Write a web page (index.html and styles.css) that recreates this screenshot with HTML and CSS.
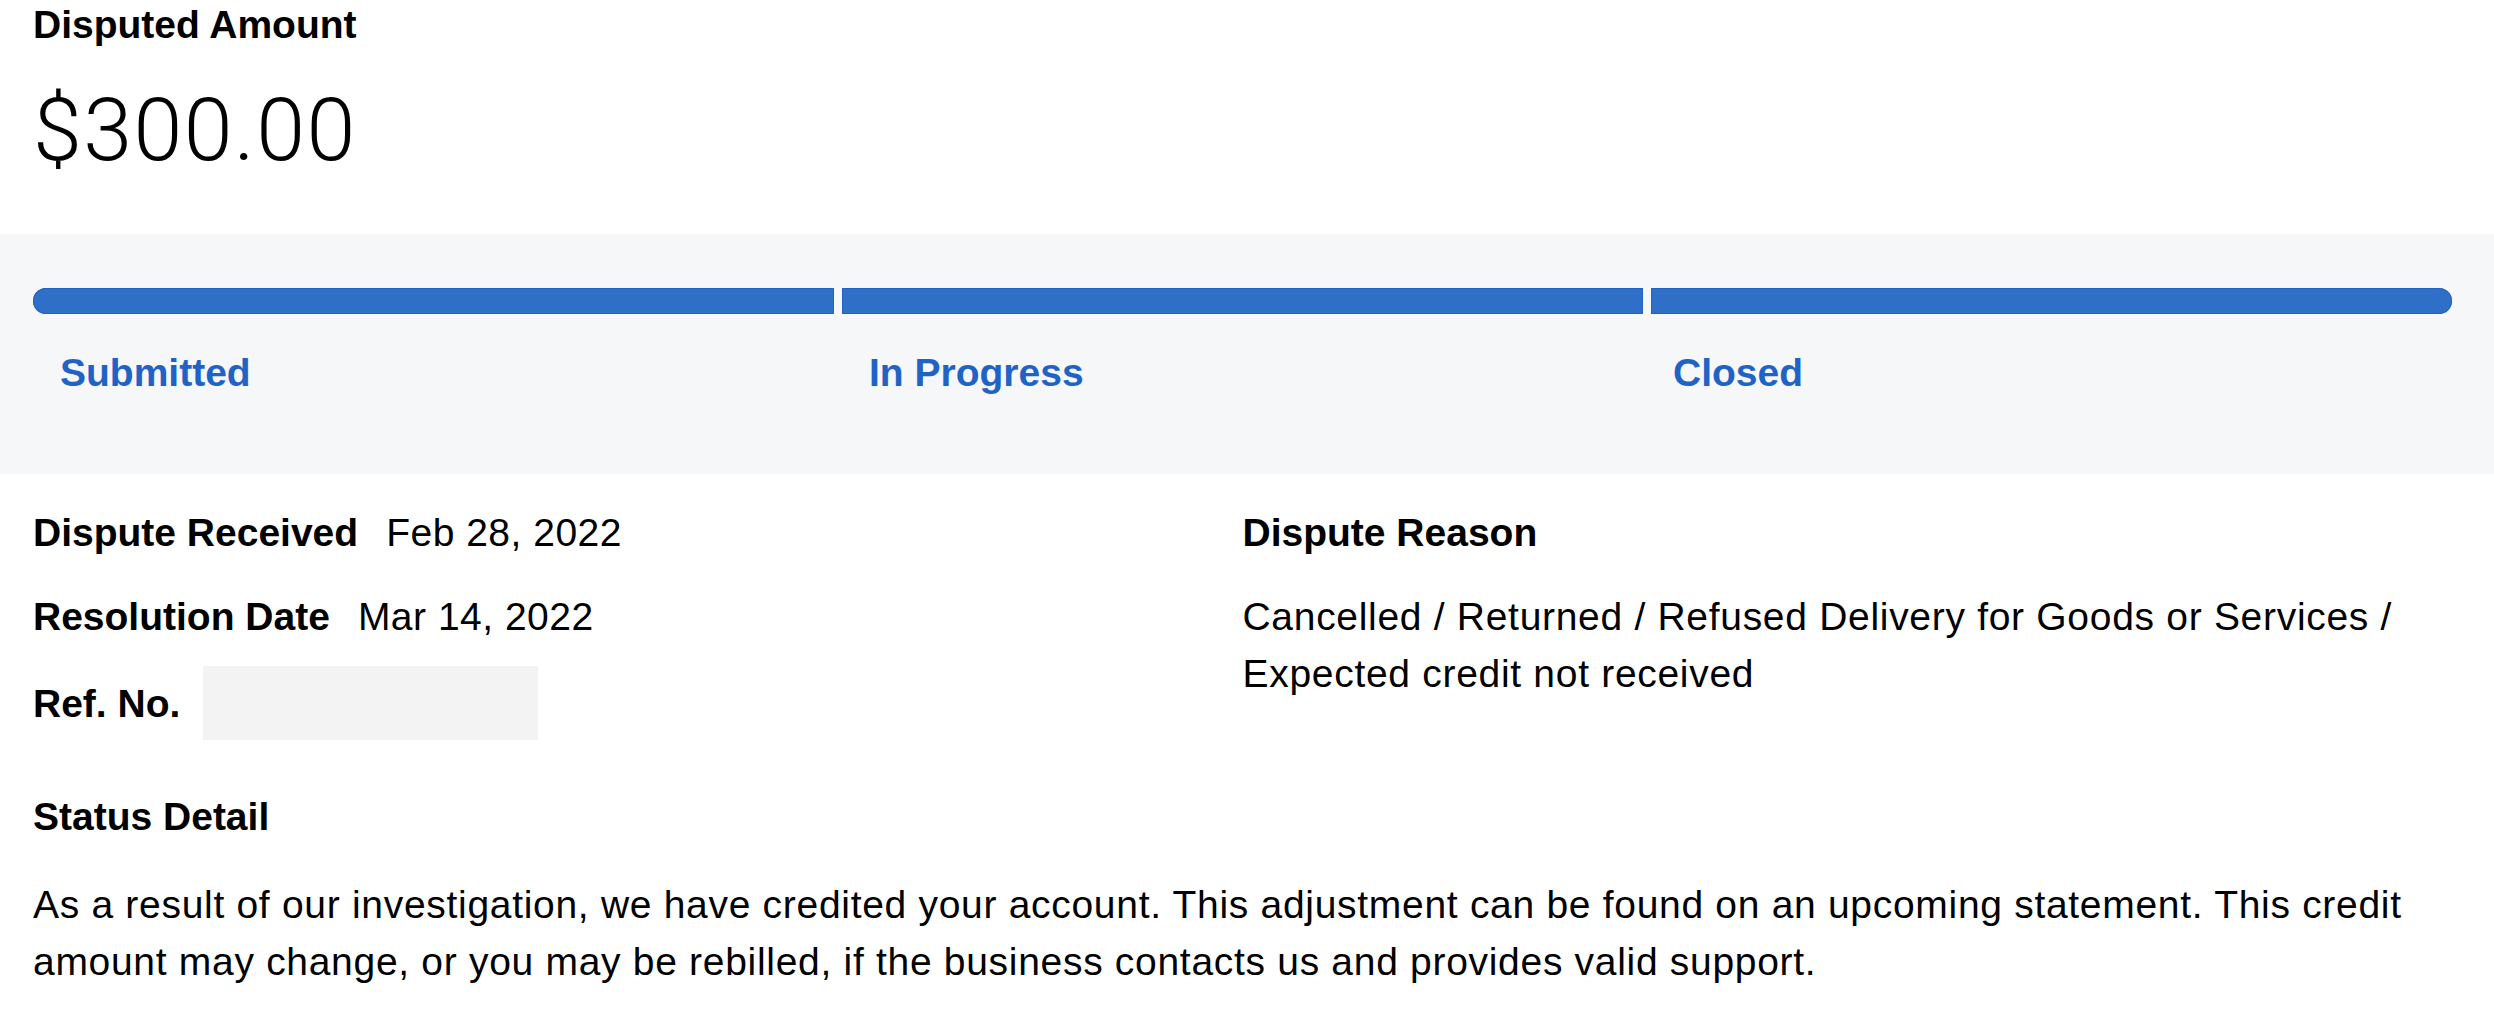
FILE: index.html
```html
<!DOCTYPE html>
<html lang="en">
<head>
<meta charset="utf-8">
<title>Dispute Details</title>
<link rel="stylesheet" href="styles.css">
</head>
<body>
<main class="dispute">
  <header class="summary">
    <div class="summary-label">Disputed Amount</div>
    <div class="summary-amount">$300.00</div>
  </header>

  <section class="tracker">
    <div class="tracker-bar">
      <div class="seg seg-first"></div>
      <div class="seg"></div>
      <div class="seg seg-last"></div>
    </div>
    <div class="tracker-labels">
      <div class="step">Submitted</div>
      <div class="step">In Progress</div>
      <div class="step step-last">Closed</div>
    </div>
  </section>

  <section class="details">
    <div class="col">
      <div class="row"><span class="label">Dispute Received</span><span class="value">Feb 28, 2022</span></div>
      <div class="row"><span class="label">Resolution Date</span><span class="value">Mar 14, 2022</span></div>
      <div class="row row-ref"><span class="label">Ref. No.</span><span class="ref-box"></span></div>
    </div>
    <div class="col">
      <div class="row"><span class="label">Dispute Reason</span></div>
      <p class="reason">Cancelled / Returned / Refused Delivery for Goods or Services / Expected credit not received</p>
    </div>
  </section>

  <section class="status">
    <div class="label">Status Detail</div>
    <p class="status-text">As a result of our investigation, we have credited your account. This adjustment can be found on an upcoming statement. This credit amount may change, or you may be rebilled, if the business contacts us and provides valid support.</p>
  </section>
</main>
</body>
</html>
```

FILE: styles.css
```css
* { box-sizing: border-box; }

html, body {
  margin: 0;
  padding: 0;
  background: #ffffff;
}

body {
  font-family: "Liberation Sans", Arial, Helvetica, sans-serif;
  color: #000000;
  font-size: 39px;
  line-height: 57px;
  letter-spacing: 0.7px;
}

.summary {
  padding: 2px 42px 0 33px;
}

.summary-label {
  font-weight: 700;
  line-height: 46px;
  letter-spacing: 0;
}

.summary-amount {
  margin-top: 32px;
  font-family: Roboto, "Liberation Sans", sans-serif;
  font-size: 88px;
  line-height: 100px;
  font-weight: 300;
  letter-spacing: 1.4px;
}

.tracker {
  margin-top: 54px;
  background: #f6f7f8;
  padding: 54px 42px 78px 33px;
}

.tracker-bar,
.tracker-labels {
  display: grid;
  grid-template-columns: 1fr 1fr 1fr;
  column-gap: 8px;
}

.seg {
  height: 26px;
  background: #2f6fc7;
  box-shadow: inset 0 0 0 1px #2462c2;
}

.seg-first { border-radius: 13px 0 0 13px; }
.seg-last { border-radius: 0 13px 13px 0; }

.tracker-labels {
  margin-top: 36px;
}

.step {
  padding-left: 27px;
  color: #1f63c6;
  font-weight: 700;
  line-height: 46px;
  letter-spacing: 0;
}

.step.step-last { padding-left: 22px; }

.details {
  display: grid;
  grid-template-columns: 1fr 1fr;
  padding: 30px 42px 0 33px;
}

.col {
  display: flex;
  flex-direction: column;
}

.row {
  display: flex;
  align-items: center;
}

.row + .row { margin-top: 27px; }
.row.row-ref { margin-top: 21px; }

.label {
  font-weight: 700;
  letter-spacing: 0;
}

.value {
  margin-left: 28px;
  letter-spacing: 0.5px;
}

.ref-box {
  display: block;
  width: 335px;
  height: 74px;
  margin-left: 23px;
  background: #f3f3f3;
}

.reason {
  margin: 27px 0 0 0;
}

.status {
  padding: 48px 42px 0 33px;
}

.status-text {
  margin: 31px 0 0 0;
}
```
